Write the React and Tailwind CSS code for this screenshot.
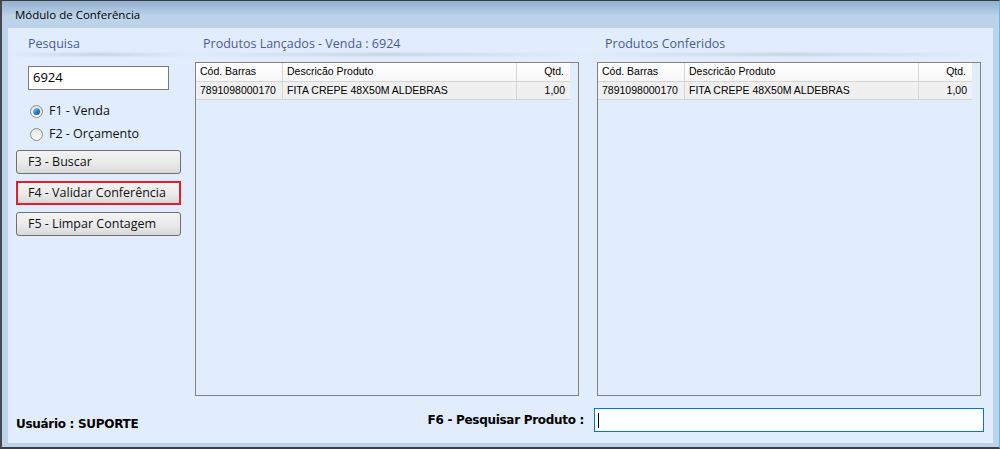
const SEGOE = { fontFamily: '"Open Sans", "Noto Sans", sans-serif' }
const TAHOMA = { fontFamily: '"Liberation Sans", Arial, sans-serif' }
const TAHOMA_BOLD = { fontFamily: '"DejaVu Sans", Verdana, sans-serif' }

const ROWS = [{ code: '7891098000170', desc: 'FITA CREPE 48X50M ALDEBRAS', qtd: '1,00' }]

function SectionTitle({ children, className = '' }) {
  return (
    <div className={`relative h-[18px] ${className}`}>
      <span className="block text-[12.5px] leading-[16px] text-[#4d5c95]" style={SEGOE}>{children}</span>
      <div className="absolute left-[-12px] right-[-8px] top-[17px] h-[3px] rounded-full bg-gradient-to-r from-transparent via-[#c6d0dc] to-transparent blur-[1px]" />
    </div>
  )
}

function Radio({ checked, label }) {
  return (
    <div className="flex items-center h-[13px]">
      <div className="w-[13px] h-[13px] rounded-full border border-[#8d8d8d] bg-gradient-to-b from-[#e4e4e4] to-[#fbfbfb] flex items-center justify-center">
        {checked && <div className="w-[7px] h-[7px] rounded-full bg-gradient-to-br from-[#a9dcff] via-[#2f87c9] to-[#0d4f8c]" />}
      </div>
      <span className="ml-[6px] text-[12.5px] text-[#111]" style={SEGOE}>{label}</span>
    </div>
  )
}

function Button({ children, focused }) {
  return (
    <div className={`w-[165px] h-[24px] flex items-center bg-gradient-to-b from-[#f3f3f3] via-[#ebebeb] to-[#dadada] ${focused ? 'border-2 border-[#e81d2a] pl-[10px]' : 'rounded-[3px] border border-[#707070] pl-[11px]'}`}>
      <span className="text-[12.5px] text-[#111]" style={SEGOE}>{children}</span>
    </div>
  )
}

function Grid({ title }) {
  return (
    <div className="w-[384px] flex flex-col">
      <SectionTitle className="pl-[8px]">{title}</SectionTitle>
      <div className="mt-[8px] h-[334px] border border-[#828282] bg-[#e1edfc]" style={TAHOMA}>
        <div className="w-[374px]">
          <div className="flex h-[19px] bg-gradient-to-b from-white to-[#f6f6f6] text-[10.5px] text-black border-b border-[#d5d5d5]">
            <div className="w-[87px] pl-[4px] flex items-center border-r border-[#d5d5d5]">Cód. Barras</div>
            <div className="w-[234px] pl-[4px] flex items-center border-r border-[#d5d5d5]">Descricão Produto</div>
            <div className="flex-1 pr-[6px] flex items-center justify-end">Qtd.</div>
          </div>
          {ROWS.map(r => (
            <div key={r.code} className="flex h-[18px] bg-[#f0f0f0] text-[10.5px] text-black border-b border-[#d5d5d5]">
              <div className="w-[87px] pl-[4px] flex items-center border-r border-[#d5d5d5]">{r.code}</div>
              <div className="w-[234px] pl-[4px] flex items-center border-r border-[#d5d5d5]">{r.desc}</div>
              <div className="flex-1 pr-[5px] flex items-center justify-end">{r.qtd}</div>
            </div>
          ))}
        </div>
      </div>
    </div>
  )
}

export default function App() {
  return (
    <div className="w-[1000px] h-[449px] flex flex-col border-t border-[#3a3a3a] border-l-2 border-l-[#464a50] border-r border-r-[#3ccbea] border-b-2 border-b-[#3a4048] bg-gradient-to-b from-[#92b0cf] via-[#bcd3ea] to-[#bcd3ea] bg-[length:100%_30px] bg-no-repeat bg-[#bcd3ea]">
      <div className="h-[27px] flex items-center pl-[13px]">
        <span className="text-[11.5px] text-black" style={SEGOE}>Módulo de Conferência</span>
      </div>
      <div className="flex-1 ml-[6px] mr-[6px] mb-[4px] bg-[#e1edfc] flex flex-col">
        <div className="flex pt-[8px]">
          <div className="w-[179px] pl-[8px] flex flex-col">
            <SectionTitle className="pl-[12px]">Pesquisa</SectionTitle>
            <div className="ml-[12px] mt-[12px] w-[141px] h-[24px] border border-[#7a7a7a] bg-white flex items-center pl-[4px]">
              <span className="text-[13px] text-black" style={SEGOE}>6924</span>
            </div>
            <div className="ml-[14px] mt-[15px] flex flex-col gap-[10px]">
              <Radio checked label="F1 - Venda" />
              <Radio label="F2 - Orçamento" />
            </div>
            <div className="mt-[9px] flex flex-col gap-[7px]">
              <Button>F3 - Buscar</Button>
              <Button focused>F4 - Validar Conferência</Button>
              <Button>F5 - Limpar Contagem</Button>
            </div>
          </div>
          <div className="ml-[8px] flex gap-[18px]">
            <Grid title="Produtos Lançados - Venda : 6924" />
            <Grid title="Produtos Conferidos" />
          </div>
        </div>
        <div className="mt-[12px] flex items-center h-[24px]" style={TAHOMA_BOLD}>
          <span className="pl-[8px] mt-[7px] text-[12px] font-bold text-black tracking-[-0.3px]">Usuário : SUPORTE</span>
          <span className="ml-auto text-[12px] font-bold text-black tracking-[-0.3px]">F6 - Pesquisar Produto :</span>
          <div className="ml-[10px] mr-[9px] w-[390px] h-[24px] border border-[#0078d7] bg-white flex items-center pl-[3px]">
            <div className="w-px h-[15px] bg-black" />
          </div>
        </div>
      </div>
    </div>
  )
}
